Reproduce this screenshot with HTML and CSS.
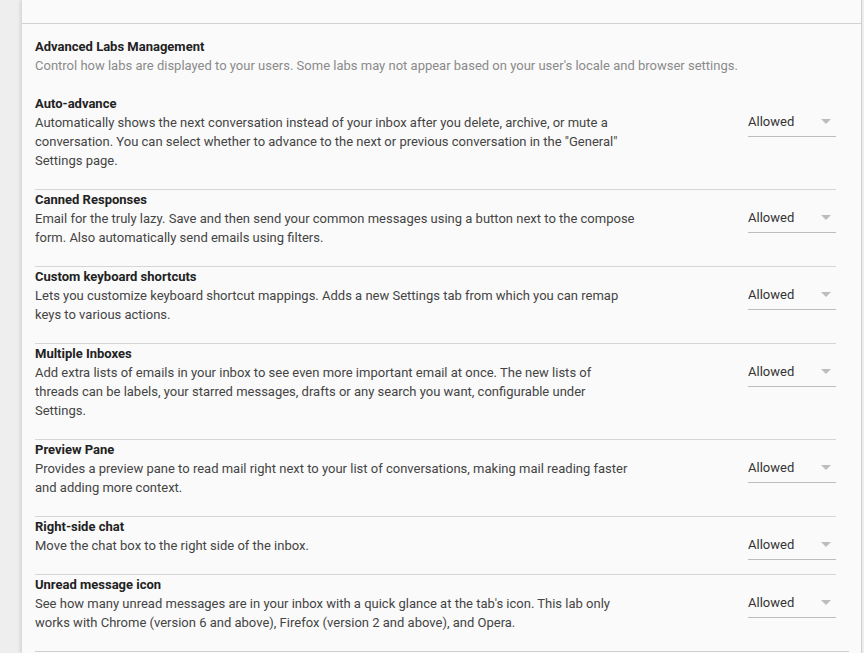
FILE: index.html
```html
<!DOCTYPE html>
<html>
<head>
<meta charset="utf-8">
<link rel="stylesheet" href="styles.css">
</head>
<body>
<div class="page">
  <div class="card">
    <div class="card-top"></div>
    <div class="section">
      <div class="header">
        <div class="title">Advanced Labs Management</div>
        <div class="subtitle">Control how labs are displayed to your users. Some labs may not appear based on your user's locale and browser settings.</div>
      </div>
      <div class="rows">
        <div class="row">
          <div class="info">
            <div class="title">Auto-advance</div>
            <div class="desc">Automatically shows the next conversation instead of your inbox after you delete, archive, or mute a conversation. You can select whether to advance to the next or previous conversation in the "General" Settings page.</div>
          </div>
          <div class="select"><span>Allowed</span><span class="arrow"></span></div>
        </div>
        <div class="row">
          <div class="info">
            <div class="title">Canned Responses</div>
            <div class="desc">Email for the truly lazy. Save and then send your common messages using a button next to the compose form. Also automatically send emails using filters.</div>
          </div>
          <div class="select"><span>Allowed</span><span class="arrow"></span></div>
        </div>
        <div class="row">
          <div class="info">
            <div class="title">Custom keyboard shortcuts</div>
            <div class="desc">Lets you customize keyboard shortcut mappings. Adds a new Settings tab from which you can remap keys to various actions.</div>
          </div>
          <div class="select"><span>Allowed</span><span class="arrow"></span></div>
        </div>
        <div class="row">
          <div class="info">
            <div class="title">Multiple Inboxes</div>
            <div class="desc">Add extra lists of emails in your inbox to see even more important email at once. The new lists of threads can be labels, your starred messages, drafts or any search you want, configurable under Settings.</div>
          </div>
          <div class="select"><span>Allowed</span><span class="arrow"></span></div>
        </div>
        <div class="row">
          <div class="info">
            <div class="title">Preview Pane</div>
            <div class="desc">Provides a preview pane to read mail right next to your list of conversations, making mail reading faster and adding more context.</div>
          </div>
          <div class="select"><span>Allowed</span><span class="arrow"></span></div>
        </div>
        <div class="row">
          <div class="info">
            <div class="title">Right-side chat</div>
            <div class="desc">Move the chat box to the right side of the inbox.</div>
          </div>
          <div class="select"><span>Allowed</span><span class="arrow"></span></div>
        </div>
        <div class="row">
          <div class="info">
            <div class="title">Unread message icon</div>
            <div class="desc">See how many unread messages are in your inbox with a quick glance at the tab's icon. This lab only works with Chrome (version 6 and above), Firefox (version 2 and above), and Opera.</div>
          </div>
          <div class="select"><span>Allowed</span><span class="arrow"></span></div>
        </div>
      </div>
      <div class="footer"></div>
    </div>
  </div>
</div>
</body>
</html>
```

FILE: styles.css
```css
html, body {
  margin: 0;
  padding: 0;
  height: 100%;
  overflow: hidden;
  background: #eeeeee;
  font-family: Roboto, "Liberation Sans", sans-serif;
  font-size: 13px;
  line-height: 19px;
}

.page {
  display: flex;
  height: 653px;
  padding-left: 22px;
  padding-right: 2px;
  box-sizing: border-box;
}

.card {
  flex: 1;
  background: #fafafa;
  border-right: 1px solid #cfcfcf;
  box-shadow: -2px 0 3px rgba(0, 0, 0, 0.1);
  overflow: hidden;
}

.card-top {
  height: 23px;
  border-bottom: 1px solid #d2d2d2;
}

.section {
  padding: 13px 25px 0 13px;
}

.header {
  margin-bottom: 18px;
}

.title {
  font-weight: 700;
  color: #222222;
}

.subtitle {
  color: #8a8a8a;
}

.row {
  display: flex;
  align-items: flex-start;
  justify-content: space-between;
  border-top: 1px solid #d6d6d6;
  padding-bottom: 19px;
}

.row:first-child {
  border-top-color: transparent;
}

.info {
  width: 603px;
}

.desc {
  color: #444444;
}

.select {
  width: 88px;
  height: 19px;
  margin-top: 18px;
  margin-bottom: -5px;
  padding-bottom: 5px;
  border-bottom: 1px solid #bdbdbd;
  display: flex;
  align-items: center;
  justify-content: space-between;
  color: #333333;
}

.arrow {
  width: 0;
  height: 0;
  margin-right: 5px;
  border-left: 5px solid transparent;
  border-right: 5px solid transparent;
  border-top: 5px solid #bdbdbd;
}

.footer {
  border-top: 1px solid #d0d0d0;
  margin-right: -13px;
}
```
